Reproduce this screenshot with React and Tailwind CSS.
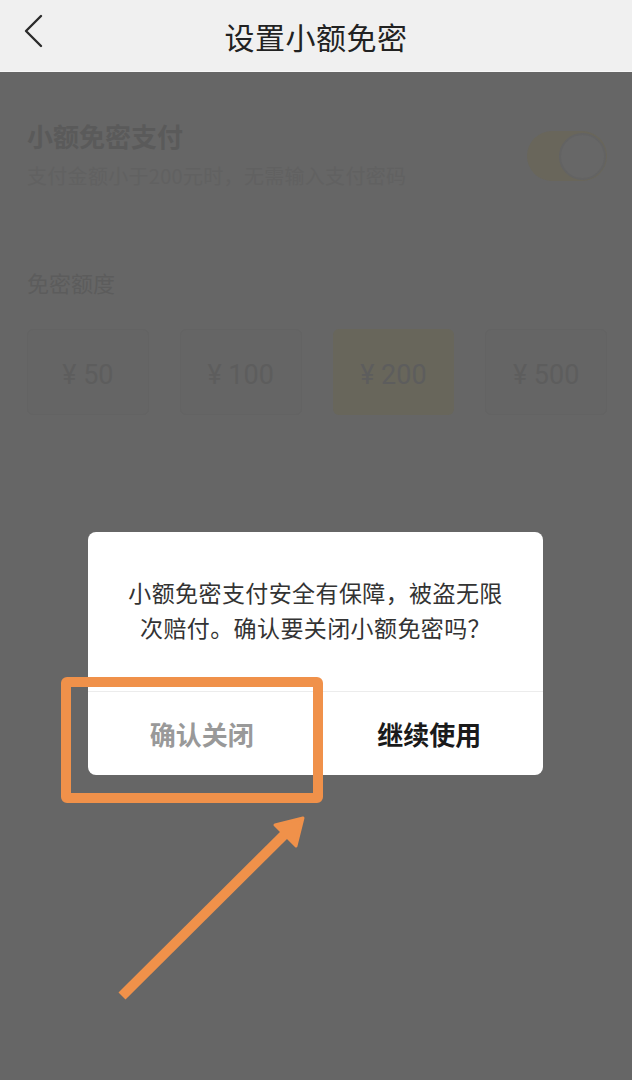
import React from "react";

const amounts = ["50", "100", "200", "500"];

const App = () => {
  const selected = "200";

  return (
    <div
      className="relative w-[632px] h-[1080px] overflow-hidden flex flex-col bg-[#666666]"
      style={{ fontFamily: '"Noto Sans CJK SC", "Noto Sans", Roboto, sans-serif' }}
    >
      {/* header */}
      <div className="relative h-[72px] shrink-0 bg-[#f0f0f0] border-b border-[#f7f7f7] flex items-center justify-center">
        <svg
          className="absolute left-[22px] top-[14px]"
          width="24"
          height="36"
          viewBox="0 0 24 36"
          fill="none"
        >
          <path d="M19 2 L4 17 L19 32" stroke="#2b2b2b" strokeWidth="2.4" strokeLinecap="round" strokeLinejoin="round" />
        </svg>
        <span className="text-[30px] leading-none text-[#222222] tracking-[0.5px]">设置小额免密</span>
      </div>

      {/* page under the mask */}
      <div className="flex-1 px-[27px] pt-[47px]">
        <div className="flex items-start justify-between">
          <div className="flex flex-col">
            <span className="text-[26px] leading-[34px] font-bold text-[#5a5a5a]">小额免密支付</span>
            <span className="mt-[10px] text-[20px] leading-[26px] text-[#616161] tracking-[0.3px]">
              支付金额小于200元时，无需输入支付密码
            </span>
          </div>
          <div className="mt-[12px] mr-[-2px] w-[80px] h-[50px] rounded-full bg-[#69665b] flex items-center justify-end pr-[1px]">
            <div className="w-[47px] h-[47px] rounded-full bg-[#676767] border-[2px] border-[#636363]" />
          </div>
        </div>

        <div className="mt-[78px] text-[22px] leading-[30px] text-[#5c5c5c]">免密额度</div>

        <div className="mt-[32px] grid grid-cols-4 gap-[31px] mr-[-2px]">
          {amounts.map((a) => (
            <div
              key={a}
              className={
                a === selected
                  ? "h-[86px] rounded-[6px] bg-[#68665b] flex items-center justify-center pt-[6px]"
                  : "h-[86px] rounded-[6px] bg-[#656565] border border-[#636363] flex items-center justify-center pt-[6px]"
              }
            >
              <span
                className="text-[27px] text-[#5d5d5d]"
                style={{ fontFamily: 'Roboto, "Noto Sans", sans-serif' }}
              >
                ¥ {a}
              </span>
            </div>
          ))}
        </div>
      </div>

      {/* dialog */}
      <div className="absolute left-[88px] top-[532px] w-[455px] rounded-[8px] bg-white overflow-hidden">
        <div className="px-[20px] pt-[43px] pb-[46px] text-center text-[23px] leading-[35px] text-[#333333] tracking-[0.4px]">
          小额免密支付安全有保障，被盗无限
          <br />
          次赔付。确认要关闭小额免密吗？
        </div>
        <div className="border-t border-[#ececec] flex h-[84px]">
          <button className="flex-1 flex items-center justify-center text-[26px] font-bold text-[#999999]">
            确认关闭
          </button>
          <button className="flex-1 flex items-center justify-center text-[26px] font-bold text-[#1a1a1a]">
            继续使用
          </button>
        </div>
      </div>

      {/* annotation box */}
      <div className="absolute left-[61px] top-[677px] w-[262px] h-[126px] border-[10px] border-[#f0914a] rounded-[6px]" />

      {/* annotation arrow */}
      <svg className="absolute left-[100px] top-[800px]" width="220" height="210" viewBox="0 0 220 210" fill="none">
        <line x1="22" y1="196" x2="186" y2="33" stroke="#f0914a" strokeWidth="10" strokeLinecap="butt" />
        <polygon points="203,18 175,25 196,46" fill="#f0914a" stroke="#f0914a" strokeWidth="3" strokeLinejoin="round" />
      </svg>
    </div>
  );
};

export default App;
